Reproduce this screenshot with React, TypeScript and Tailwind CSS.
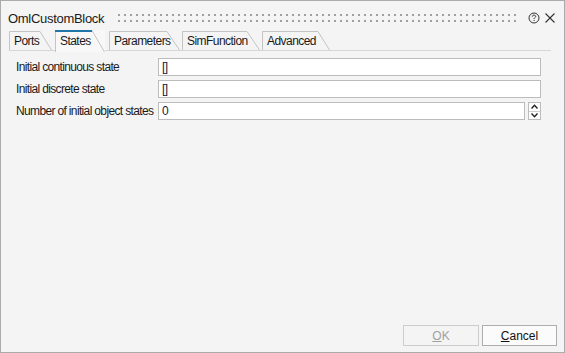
import React from "react";

const font = { fontFamily: '"Liberation Sans", Arial, sans-serif' };

function Tab({ label, width, slant, active, ml }: { label: string; width: number; slant: number; active?: boolean; ml: number }) {
  const h = active ? 21 : 19;
  return (
    <div
      className={`relative flex items-center text-[12px] tracking-[-0.55px] text-[#1a1a1a] pl-[5px] ${active ? "h-[21px] bg-[#f8f8f8] -mb-px z-10" : "h-[19px]"}`}
      style={{ width, marginLeft: ml }}
    >
      <svg className="absolute left-0 top-0 pointer-events-none" width={width} height={h + 1}>
        {active ? (
          <>
            <polygon points={`0,${h + 1} 0,0 ${width - slant},0 ${width},${h + 1}`} fill="#f8f8f8" />
            <polyline points={`0.5,${h + 1} 0.5,0.5 ${width - slant},0.5 ${width - 0.5},${h + 1}`} fill="none" stroke="#c4c4c4" strokeWidth="1" />
            <line x1="0" y1="1" x2={width - slant} y2="1" stroke="#1f77a8" strokeWidth="2" />
          </>
        ) : (
          <polyline points={`0.5,${h} 0.5,0.5 ${width - slant},0.5 ${width - 0.5},${h}`} fill="none" stroke="#c4c4c4" strokeWidth="1" />
        )}
      </svg>
      <span className="relative">{label}</span>
    </div>
  );
}

function Field({ value, spinner }: { value: string; spinner?: boolean }) {
  return (
    <div className="flex h-[18px] gap-[3px]">
      <div className="flex-1 h-[18px] bg-white border border-[#bcbcbc] flex items-center pl-[3px] text-[12px] text-[#101c40]">
        {value}
      </div>
      {spinner && (
        <div className="w-[13px] h-[18px] border border-[#bcbcbc] bg-white flex flex-col">
          <div className="flex-1 flex items-center justify-center border-b border-[#d0d0d0]">
            <svg width="7" height="5" viewBox="0 0 7 5">
              <polyline points="0.5,4.5 3.5,1.2 6.5,4.5" fill="none" stroke="#222" strokeWidth="1.4" />
            </svg>
          </div>
          <div className="flex-1 flex items-center justify-center">
            <svg width="7" height="5" viewBox="0 0 7 5">
              <polyline points="0.5,0.5 3.5,3.8 6.5,0.5" fill="none" stroke="#222" strokeWidth="1.4" />
            </svg>
          </div>
        </div>
      )}
    </div>
  );
}

export default function App() {
  return (
    <div className="w-[565px] h-[353px] bg-[#f4f4f4] border border-[#ababab] flex flex-col" style={font}>
      {/* title bar */}
      <div className="h-[29px] pt-[7px] flex items-center pl-[7px] pr-[9px]">
        <span className="text-[13px] tracking-[-0.3px] text-[#1a1a1a]">OmlCustomBlock</span>
        <div className="flex-1 ml-[14px] mr-[8px] h-[9px] mt-[-2px]">
          <svg width="100%" height="9">
            <defs>
              <pattern id="grip" width="6" height="6" patternUnits="userSpaceOnUse">
                <rect x="0" y="0" width="2" height="2" fill="#a0a0a0" />
              </pattern>
            </defs>
            <rect x="0" y="0" width="100%" height="9" fill="url(#grip)" />
          </svg>
        </div>
        <svg width="12" height="12" viewBox="0 0 12 12" className="mr-[5px] mt-[-2px]">
          <circle cx="6" cy="6" r="5" fill="none" stroke="#333" strokeWidth="1" />
          <path d="M4.3 4.7 C4.3 3.6 5 3.1 6 3.1 C7 3.1 7.7 3.7 7.7 4.5 C7.7 5.4 6.4 5.7 6.1 6.4 L6.1 7.1" fill="none" stroke="#333" strokeWidth="1" />
          <rect x="5.6" y="8" width="1" height="1" fill="#333" />
        </svg>
        <svg width="10" height="10" viewBox="0 0 10 10" className="mt-[-2px]">
          <line x1="0.5" y1="0.5" x2="9.5" y2="9.5" stroke="#333" strokeWidth="1.1" />
          <line x1="9.5" y1="0.5" x2="0.5" y2="9.5" stroke="#333" strokeWidth="1.1" />
        </svg>
      </div>

      {/* tabs */}
      <div className="ml-[8px] mr-[13px] flex items-end border-b border-[#d6d6d6] h-[21px]">
        <Tab label="Ports" width={43} slant={12} ml={0} />
        <Tab label="States" width={50} slant={13} ml={3} active />
        <Tab label="Parameters" width={71} slant={13} ml={4} />
        <Tab label="SimFunction" width={78} slant={13} ml={2} />
        <Tab label="Advanced" width={68} slant={12} ml={2} />
      </div>

      {/* fields */}
      <div className="mt-[7px] pl-[15px] pr-[23px] grid grid-cols-[142px_1fr] gap-y-[4px] items-center text-[12px] tracking-[-0.65px] text-[#1a1a1a]">
        <span>Initial continuous state</span>
        <Field value="[]" />
        <span>Initial discrete state</span>
        <Field value="[]" />
        <span className="whitespace-nowrap">Number of initial object states</span>
        <Field value="0" spinner />
      </div>

      <div className="flex-1" />

      {/* buttons */}
      <div className="flex justify-end gap-[3px] pr-[7px] pb-[6px]">
        <div className="w-[76px] h-[21px] border border-[#cccccc] bg-[#f4f4f4] flex items-center justify-center text-[12px] text-[#a0a0a0]">
          <span><span className="underline">O</span>K</span>
        </div>
        <div className="w-[75px] h-[21px] border border-[#adadad] bg-[#fbfbfb] flex items-center justify-center text-[12px] text-[#111]">
          <span><span className="underline">C</span>ancel</span>
        </div>
      </div>
    </div>
  );
}
